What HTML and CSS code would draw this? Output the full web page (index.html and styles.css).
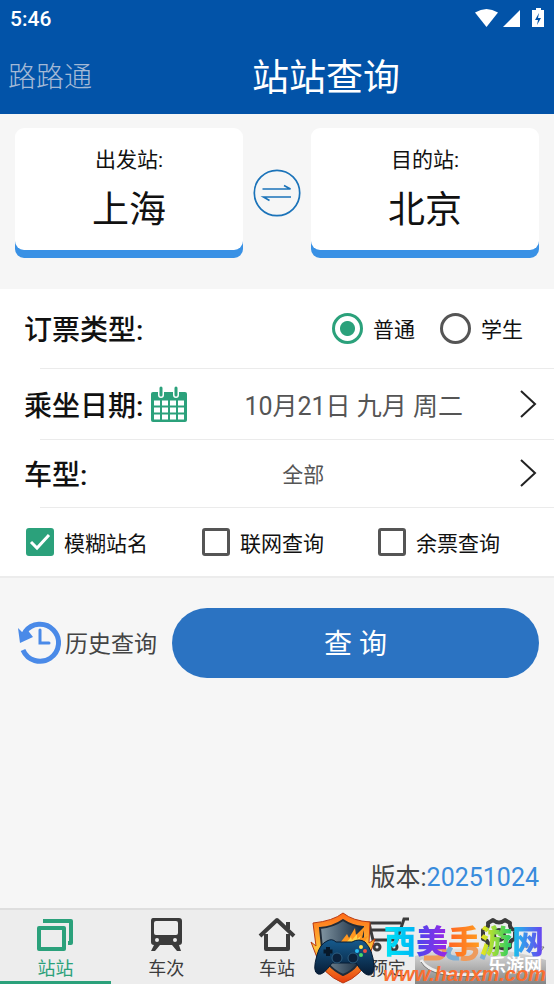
FILE: index.html
```html
<!DOCTYPE html>
<html lang="zh-CN">
<head>
    <meta charset="UTF-8">
    <meta name="viewport" content="width=device-width, initial-scale=1">
    <title>站站查询</title>
    <link rel="stylesheet" href="styles.css">
</head>
<body>
    <header class="top">
        <div class="status">
            <span class="clock">5:46</span>
            <svg class="status-icons" width="70" height="22" viewBox="0 0 70 22" fill="#fff">
                <path d="M0 4.500Q11.500-2.500 23 4.500L11.500 19z"/>
                <path d="M45 2v17H28z"/>
                <path fill-rule="evenodd" d="M58 2h3V0h5v2h3v17H57V2zM64 5l-4 7h3l-1 5 4-7h-3z"/>
            </svg>
        </div>
        <div class="title-bar">
            <span class="brand">路路通</span>
            <h1>站站查询</h1>
        </div>
    </header>

    <main>
        <section class="stations">
            <button class="station" type="button">
                <span class="station-label">出发站:</span>
                <span class="station-name">上海</span>
            </button>
            <button class="swap" type="button" aria-label="交换站点">
                <svg width="48" height="48" viewBox="0 0 48 48" fill="none" stroke="#1b73b9">
                    <circle cx="24" cy="24" r="22.700" stroke-width="1.700"/>
                    <path stroke-width="1.600" d="M9.500 20H37.500L31 16.500M38 28H10.500L16.500 31.500"/>
                </svg>
            </button>
            <button class="station" type="button">
                <span class="station-label">目的站:</span>
                <span class="station-name">北京</span>
            </button>
        </section>

        <form class="options" id="query">
            <div class="row row-type">
                <span class="row-label">订票类型:</span>
                <label class="radio"><input type="radio" name="type" checked>普通</label>
                <label class="radio"><input type="radio" name="type">学生</label>
            </div>
            <button class="row row-date" type="button">
                <span class="row-label">乘坐日期:</span>
                <svg class="calendar" width="38" height="36" viewBox="0 0 38 36">
                    <rect x="1" y="6" width="36" height="30" rx="2" fill="#2ba17b"/>
                    <path d="M11 2v7M26 2v7" stroke="#fff" stroke-width="6" stroke-linecap="round"/>
                    <path d="M11 2v7M26 2v7" stroke="#2ba17b" stroke-width="3" stroke-linecap="round"/>
                    <path d="M4 17h30M4 24h30M4 31h30" stroke="#fff" stroke-width="5" stroke-dasharray="6 2"/>
                </svg>
                <span class="row-value date">10月21日 九月 周二</span>
                <svg class="arrow" width="18" height="28" viewBox="0 0 18 28"><path d="M2 1l14 13L2 27" fill="none" stroke="#222" stroke-width="2"/></svg>
            </button>
            <button class="row row-train" type="button">
                <span class="row-label">车型:</span>
                <span class="row-value">全部</span>
                <svg class="arrow" width="18" height="28" viewBox="0 0 18 28"><path d="M2 1l14 13L2 27" fill="none" stroke="#222" stroke-width="2"/></svg>
            </button>
            <div class="checks">
                <label class="check"><input type="checkbox" checked>模糊站名</label>
                <label class="check"><input type="checkbox">联网查询</label>
                <label class="check"><input type="checkbox">余票查询</label>
            </div>
        </form>

        <div class="actions">
            <a class="history" href="#history">
                <svg width="46" height="44" viewBox="0 0 46 44" fill="none" stroke="#4a8ae8">
                    <path stroke-width="5" d="M10 12A18.500 18.500 0 1 1 8 30"/>
                    <path fill="#4a8ae8" stroke="none" d="M3 8l4 4 4-4 7 9-13 6z"/>
                    <path stroke-width="3" stroke-linecap="round" d="M25 10v13h9"/>
                </svg>
                历史查询
            </a>
            <button class="submit" type="submit" form="query">查 询</button>
        </div>
        <p class="version">版本:<span>20251024</span></p>
    </main>

    <nav class="tabs">
        <a class="tab active" href="#zz">
            <svg width="38" height="36" viewBox="0 0 38 36" fill="none" stroke="currentColor" stroke-width="4" stroke-linejoin="round">
                <path d="M3 11h25v21H3z"/><path d="M7 4h28v22h-3"/>
            </svg>
            <span>站站</span>
        </a>
        <a class="tab" href="#cc">
            <svg width="38" height="36" viewBox="0 0 38 36" fill="currentColor">
                <path fill-rule="evenodd" d="M6 1h26q3 0 3 3v21q0 3-3 3l2 6h-4l-5-6H13l-5 6H4l3-6q-3 0-3-3V4q0-3 2-3zM9 4q-2 0-2 2v10q0 2 2 2h20q2 0 2-2V6q0-2-2-2zM10 21a2 2 0 1 0 0 4 2 2 0 0 0 0-4zM28 21a2 2 0 1 0 0 4 2 2 0 0 0 0-4z"/>
            </svg>
            <span>车次</span>
        </a>
        <a class="tab" href="#station">
            <svg width="38" height="36" viewBox="0 0 38 36" fill="none" stroke="currentColor" stroke-width="4" stroke-linejoin="round">
                <path d="M2 19L19 3l17 16M8 17v15h22V17M30 12V5"/>
            </svg>
            <span>车站</span>
        </a>
        <a class="tab" href="#book">
            <svg width="44" height="36" viewBox="0 0 44 36" fill="none" stroke="currentColor" stroke-width="3">
                <path d="M43 2h-5l-7 21H7L3 6h32M6 13h27"/><circle cx="11" cy="30" r="3"/><circle cx="28" cy="30" r="3"/>
            </svg>
            <span>预定</span>
        </a>
        <a class="tab" href="#settings" aria-label="设置">
            <svg width="38" height="36" viewBox="0 0 38 36" fill="none" stroke="currentColor" stroke-width="4" stroke-linejoin="round">
                <path d="M13 3q6 5 12 0l5 3q-1 6 5 7v9q-6 1-5 8l-5 3q-6-5-12 0l-5-3q1-7-5-8v-9q6-1 5-7z"/><circle cx="19" cy="18" r="5"/>
            </svg>
        </a>
        <div class="watermark">
            <svg class="shield" width="66" height="72" viewBox="0 0 66 72">
                <defs>
                    <linearGradient id="fire" x2="0" y2="1"><stop stop-color="#ff6a16"/><stop offset=".5" stop-color="#ffc33b"/><stop offset="1" stop-color="#e83b0c"/></linearGradient>
                    <linearGradient id="steel"><stop stop-color="#8296a3"/><stop offset="1" stop-color="#12263b"/></linearGradient>
                    <linearGradient id="pad" x2="0" y2="1"><stop stop-color="#165b8e"/><stop offset="1" stop-color="#071c35"/></linearGradient>
                </defs>
                <path fill="url(#fire)" stroke="#b93a12" d="M33 1Q43 9 60 10l-1 21 6-4-6 18Q52 64 33 71 12 62 6 43L1 30l5 4L3 11Q23 9 33 1z"/>
                <path fill="url(#steel)" stroke="#202b38" stroke-width="2" d="M33 8Q42 14 53 15v21Q51 56 33 63 14 54 12 36L10 16Q23 15 33 8z"/>
                <path fill="#ff961f" d="M30 31l7-9 2 4 6-10 1 7 9-9-3 12 6-2-8 14H32z"/>
                <path fill="#ffd34a" d="M36 31l5-6 1 3 5-6v5l4-3-4 9z"/>
                <path fill="url(#pad)" stroke="#061c34" d="M17 29q5-3 9 1h16q7-4 13 0 8 8 9 24 0 10-6 9-5-1-12-12H22Q13 64 8 62q-6-2-1-19 3-11 10-14z"/>
                <path d="M18 35v9M13.500 39.500h9" stroke="#071829" stroke-width="4"/>
                <circle cx="27" cy="46" r="5" fill="#0b213b" stroke="#2d5e81"/><circle cx="43" cy="46" r="5" fill="#0b213b" stroke="#2d5e81"/>
                <circle cx="51" cy="35" r="2" fill="#ffe34f"/><circle cx="47" cy="39" r="2" fill="#28bdf5"/><circle cx="55" cy="39" r="2" fill="#ef4f42"/><circle cx="51" cy="43" r="2" fill="#48d968"/>
            </svg>
            <svg class="badge-art" width="131" height="48" viewBox="0 0 131 48">
                <defs>
                    <linearGradient id="plate" x2="0" y2="1"><stop stop-color="#e4e4e4"/><stop offset="1" stop-color="#858585"/></linearGradient>
                </defs>
                <path fill="url(#plate)" d="M0 20q60-18 131 4v24H0z"/>
                <path fill="none" stroke="#eee" stroke-width="3" d="M6 24q10 18 64 14"/>
                <path fill="none" stroke="#777" d="M6 26q10 18 64 14M108 11h21l-6 8"/>
                <g fill="none" stroke-width="5">
                    <path stroke="#ee9b5c" d="M12 12h14q5 0 3 5t-8 5H9M48 12q16-2 12 6-3 6-14 4"/>
                    <path stroke="#7caed4" d="M36 11q-8 12 8 11M72 10l-5 13"/>
                </g>
            </svg>
            <span class="badge">乐游网</span>
            <strong class="site-name"><span>西</span><span>美</span><span>手</span><span>游</span><span>网</span></strong>
            <span class="site-url">www.hanxm.com</span>
        </div>
    </nav>
</body>
</html>
```
FILE: styles.css
```css
* {
    box-sizing: border-box;
}
body {
    margin: 0;
    min-height: 100vh;
    display: flex;
    flex-direction: column;
    background: #f6f6f6;
    color: #111;
    font-family: Roboto, "Noto Sans CJK SC", sans-serif;
    font-size: 21px;
    font-weight: 400;
}
button {
    border: 0;
    padding: 0;
    background: none;
    color: inherit;
    font: inherit;
    cursor: pointer;
}
a {
    color: inherit;
    text-decoration: none;
}
svg {
    display: block;
    flex: none;
}
.top {
    background: #0253a8;
    color: #fff;
}
.status {
    display: flex;
    justify-content: space-between;
    align-items: center;
    height: 38px;
    padding: 0 9px 0 10px;
}
.clock {
    font-size: 21px;
    font-weight: 500;
}
.title-bar {
    display: flex;
    align-items: center;
    height: 76px;
    padding-bottom: 2px;
}
.brand {
    width: 98px;
    padding-left: 8px;
    color: #a3b9d6;
    font-size: 28px;
    font-weight: 300;
}
h1 {
    flex: 1;
    margin: 0;
    font-size: 37px;
    font-weight: 400;
    text-align: center;
}
main {
    flex: 1;
    display: flex;
    flex-direction: column;
}
.stations {
    display: flex;
    align-items: center;
    gap: 10px;
    padding: 14px 15px 31px;
}
/* white face over a blue base that shows along the bottom edge */
.station {
    position: relative;
    z-index: 0;
    flex: 1;
    display: flex;
    flex-direction: column;
    align-items: center;
    height: 130px;
    padding-top: 16px;
    border-radius: 9px;
    background: linear-gradient(transparent 50%, #3991e5 50%);
}
.station::before {
    content: "";
    position: absolute;
    inset: 0 0 8px;
    z-index: -1;
    border-radius: 9px;
    background: #fff;
}
.station-label {
    line-height: 32px;
}
.station-name {
    font-size: 37px;
    line-height: 70px;
}
.options {
    background: #fff;
    border-bottom: 2px solid #ececec;
}
.row {
    display: flex;
    align-items: center;
    width: 100%;
    padding: 0 17px 2px 24px;
    text-align: left;
    background: linear-gradient(#ebebeb, #ebebeb) 40px 100% / 100% 1px no-repeat;
}
.row-type {
    height: 80px;
    padding-right: 31px;
    gap: 25px;
}
.row-date {
    height: 71px;
}
.row-train {
    height: 68px;
}
.row-label {
    font-size: 28px;
    font-weight: 500;
}
.row-type .row-label {
    flex: 1;
}
.row-value {
    flex: 1;
    color: #555;
    text-align: center;
}
.date {
    font-size: 25px;
}
.calendar {
    margin-left: 7px;
}
.radio,
.check {
    display: flex;
    align-items: center;
    gap: 10px;
}
input {
    appearance: none;
    margin: 0;
    border: 3px solid #555;
}
.radio input {
    width: 31px;
    height: 31px;
    border-radius: 50%;
}
.radio input:checked {
    border-color: #2ba17b;
    background: radial-gradient(circle, #2ba17b 7px, #fff 8px);
}
.checks {
    display: grid;
    grid-template-columns: repeat(3, 1fr);
    height: 68px;
    padding-left: 26px;
}
.check input {
    width: 28px;
    height: 28px;
    border-radius: 3px;
}
.check input:checked {
    border-color: #2ba17b;
    background: #2ba17b url("data:image/svg+xml,%3Csvg xmlns='http://www.w3.org/2000/svg' viewBox='0 0 22 22'%3E%3Cpath d='M2 11l6 6L20 4' fill='none' stroke='white' stroke-width='3'/%3E%3C/svg%3E") center / 22px no-repeat;
}
.actions {
    display: flex;
    align-items: center;
    gap: 15px;
    padding: 30px 15px;
}
.history {
    display: flex;
    align-items: center;
    gap: 4px;
    padding-bottom: 2px;
    color: #444;
    font-size: 23px;
}
.submit {
    flex: 1;
    height: 70px;
    padding-bottom: 2px;
    border-radius: 35px;
    background: #2b73c2;
    color: #fff;
    font-size: 28px;
}
.version {
    margin: auto 15px 15px;
    color: #444;
    font-size: 25px;
    text-align: right;
}
.version span {
    color: #398bdc;
}
.tabs {
    position: relative;
    display: flex;
    height: 76px;
    border-top: 2px solid #dedede;
    background: #ededed;
    color: #3b3b3b;
    font-size: 18px;
}
.tab {
    flex: 1;
    display: flex;
    flex-direction: column;
    align-items: center;
    padding-top: 7px;
}
.tab span {
    line-height: 32px;
}
.tab.active {
    color: #2ba17b;
    box-shadow: inset 0 -3px #2ba17b;
}
.watermark {
    position: absolute;
    right: 8px;
    bottom: 0;
    width: 236px;
    height: 72px;
}
.shield {
    position: absolute;
    left: 0;
    bottom: 0;
}
.badge-art {
    position: absolute;
    right: 0;
    bottom: 0;
}
.badge {
    position: absolute;
    right: 4px;
    bottom: 2px;
    color: #fff;
    font-size: 18px;
    font-weight: 700;
    line-height: 32px;
}
.site-name {
    position: absolute;
    right: 2px;
    top: 8px;
    display: flex;
    font-size: 32px;
    font-weight: 900;
    line-height: 44px;
}
.site-name span {
    color: transparent;
    background: linear-gradient(90deg, #00e5f5, #00b4f4);
    background-clip: text;
}
.site-name span:nth-child(2) {
    background-image: linear-gradient(90deg, #4a48ed, #9b26e5);
}
.site-name span:nth-child(3) {
    background-image: linear-gradient(90deg, #ff6424, #ff9c20);
}
.site-name span:nth-child(4) {
    background-image: linear-gradient(90deg, #f6e719, #20cc69);
}
.site-name span:nth-child(5) {
    background-image: linear-gradient(90deg, #17c8eb, #6e3cf0);
}
.site-url {
    position: absolute;
    right: 0;
    bottom: 0;
    color: #fa6e30;
    font-family: "Liberation Sans", sans-serif;
    font-size: 20px;
    font-style: italic;
    font-weight: 700;
    line-height: 20px;
}
```
